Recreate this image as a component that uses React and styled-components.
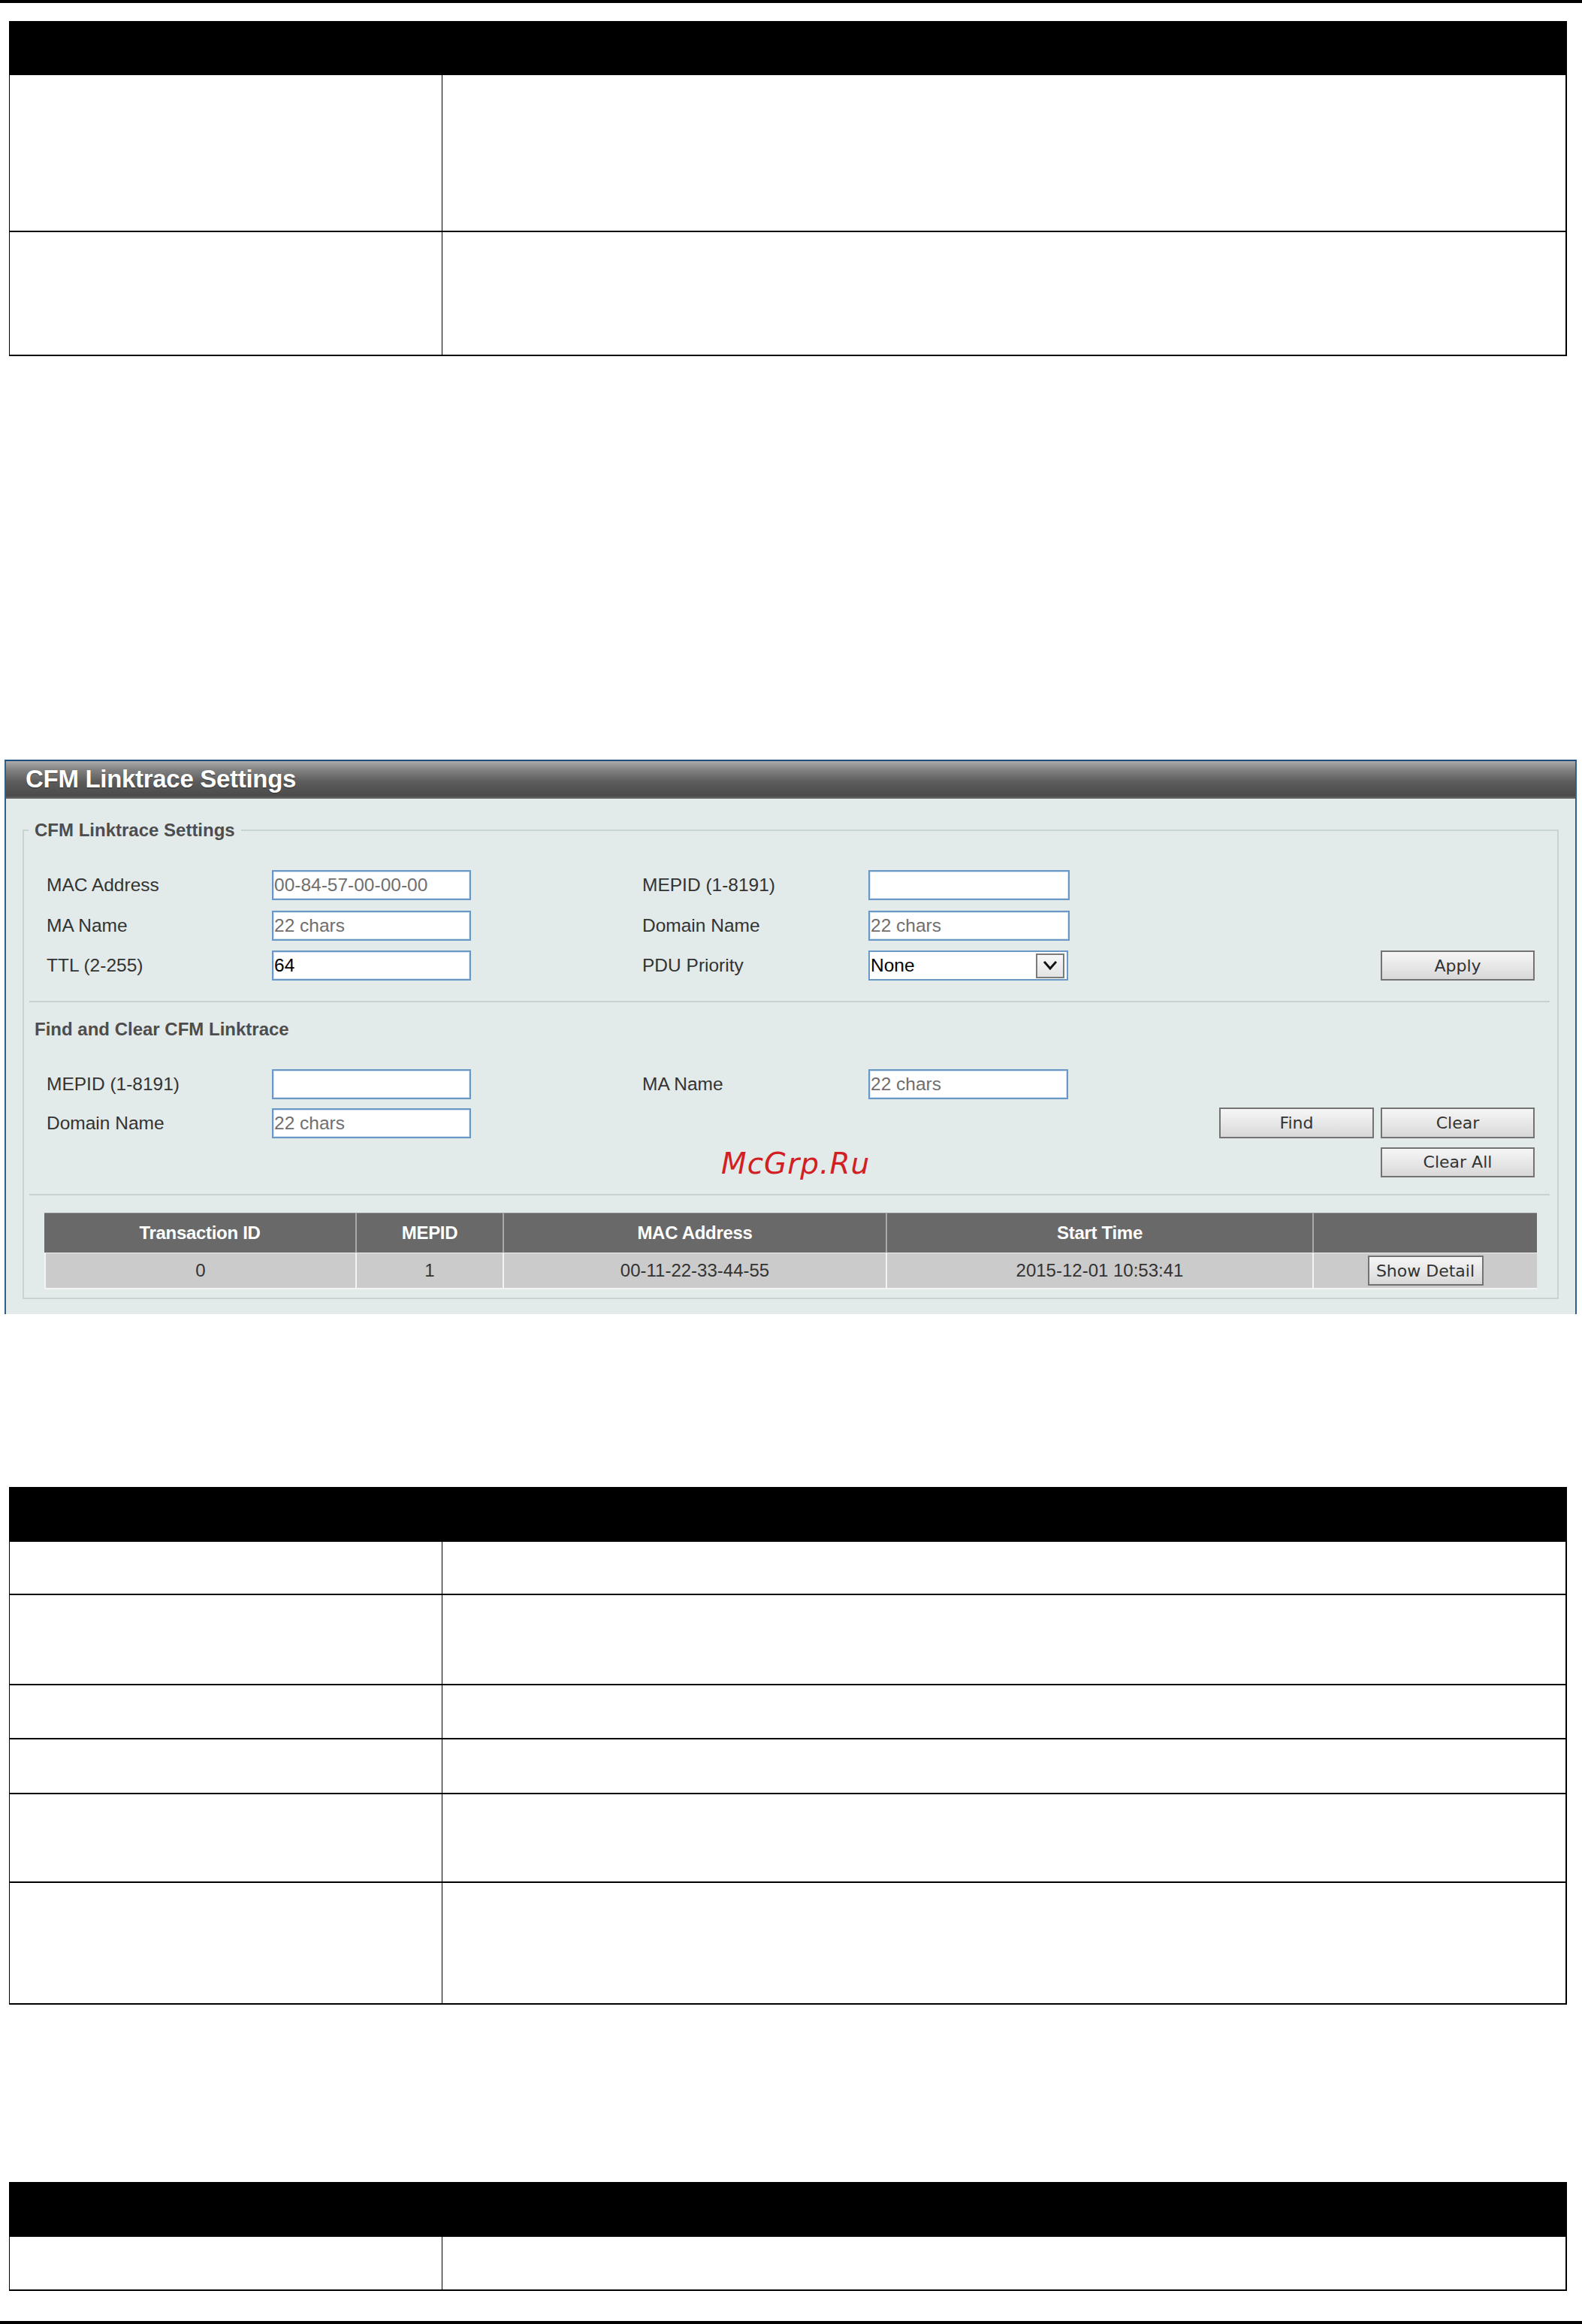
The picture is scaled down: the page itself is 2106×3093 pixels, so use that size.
import React from 'react';
import styled, { createGlobalStyle } from 'styled-components';

const GlobalStyle = createGlobalStyle`
  html, body {
    margin: 0;
    padding: 0;
    background: #ffffff;
  }
  body {
    font-family: 'Liberation Sans', Arial, sans-serif;
  }
`;

const Page = styled.div`
  width: 2106px;
  display: flex;
  flex-direction: column;
`;

const Rule = styled.div`
  height: ${(p) => p.h}px;
  margin-top: ${(p) => p.mt || 0}px;
  background: #000000;
`;

/* blank parameter tables of the manual page */
const DocTable = styled.div`
  margin: ${(p) => p.mt}px 20px 0 12px;
  border-left: 1px solid #000;
  border-right: 2px solid #000;
`;

const DocHead = styled.div`
  height: ${(p) => p.h}px;
  background: #000;
`;

const DocRow = styled.div`
  display: grid;
  grid-template-columns: 575px 1fr;
  height: ${(p) => p.h}px;
  box-sizing: border-box;
  border-bottom: 2px solid #000;
`;

const DocCell = styled.div`
  & + & {
    border-left: 1px solid #000;
  }
`;

/* web UI panel */
const Panel = styled.section`
  position: relative;
  margin: 537px 7px 0 6px;
  border-top: 2px solid #1d4f7c;
  border-left: 2px solid #2f5f8c;
  border-right: 2px solid #2f5f8c;
  background: #e2eaea;
  padding-bottom: 20px;
`;

const PanelHeader = styled.div`
  height: 50px;
  line-height: 48px;
  padding-left: 26px;
  background: linear-gradient(
    to bottom,
    #ababab 0%,
    #838383 22%,
    #5c5c5c 55%,
    #4a4a4a 92%,
    #6c6c6c 100%
  );
  color: #ffffff;
  font-size: 33px;
  font-weight: bold;
  letter-spacing: -0.3px;
  text-shadow: 0 1px 1px rgba(0, 0, 0, 0.45);
`;

const Fieldset = styled.fieldset`
  margin: 28px 22px 0;
  padding: 0 0 11px;
  min-width: 0;
  border: 2px solid #c8d3d3;
`;

const Legend = styled.legend`
  margin-left: 6px;
  padding: 0 8px;
  font-size: 24px;
  line-height: 28px;
  font-weight: bold;
  color: #4d4d4d;
`;

const SubTitle = styled.div`
  margin: 22px 0 0 14px;
  font-size: 24px;
  line-height: 28px;
  font-weight: bold;
  color: #4d4d4d;
`;

const Separator = styled.div`
  height: 2px;
  margin: ${(p) => p.mt}px 10px 0 7px;
  background: #c6d1d1;
`;

const FormGrid = styled.div`
  display: grid;
  grid-template-columns: 300px 265px 228px 301px 268px 1fr 205px;
  grid-auto-rows: ${(p) => p.rowH}px;
  row-gap: ${(p) => p.gap}px;
  align-items: center;
  margin: ${(p) => p.mt}px 30px 0;
`;

const Label = styled.label`
  font-size: 24.5px;
  color: #333333;
  white-space: nowrap;
`;

const TextInput = styled.input`
  box-sizing: border-box;
  width: ${(p) => p.w || 265}px;
  height: 40px;
  padding: 0 1px;
  border: 2px solid #6a98c6;
  box-shadow: inset 0 0 0 1px #d6e4f2;
  background: #ffffff;
  font-family: 'Liberation Sans', Arial, sans-serif;
  font-size: 24.5px;
  color: #000000;
  outline: none;

  &::placeholder {
    color: #6f6f6f;
    opacity: 1;
  }
`;

const SelectBox = styled.div`
  box-sizing: border-box;
  width: 266px;
  height: 40px;
  display: flex;
  align-items: center;
  justify-content: space-between;
  padding: 0 3px 0 1px;
  border: 2px solid #6a98c6;
  background: #ffffff;
  font-size: 24.5px;
  color: #000000;
`;

const SelectArrow = styled.div`
  box-sizing: border-box;
  width: 38px;
  height: 33px;
  display: flex;
  align-items: center;
  justify-content: center;
  border: 2px solid #7b7b7b;
  background: linear-gradient(#f7f7f7, #e4e4e4);
`;

const Button = styled.button`
  box-sizing: border-box;
  width: ${(p) => p.w || 205}px;
  height: ${(p) => p.h || 40}px;
  padding: 0;
  border: 2px solid #737373;
  background: linear-gradient(to bottom, #f6f6f6 0%, #e6e6e6 55%, #d8d8d8 100%);
  font-family: 'DejaVu Sans', Verdana, sans-serif;
  font-size: 22px;
  color: #333333;
  grid-column: ${(p) => p.col || 'auto'};
`;

const ButtonGroup = styled.div`
  grid-column: 5 / 8;
  display: flex;
  justify-content: flex-end;
  gap: 9px;
`;

const ResultGrid = styled.div`
  display: grid;
  grid-template-columns: 414px 196px 510px 568px 299px;
  margin: 23px 27px 0;
  border-bottom: 2px solid #f4f4f4;
`;

const HeadCell = styled.div`
  height: 53px;
  display: flex;
  align-items: center;
  justify-content: center;
  background: #696969;
  border-top: 1px solid #8a8a8a;
  color: #ffffff;
  font-size: 24px;
  font-weight: bold;
  letter-spacing: -0.3px;
  box-sizing: border-box;

  & + & {
    border-left: 2px solid #a9a9a9;
  }
`;

const DataCell = styled.div`
  height: 47px;
  display: flex;
  align-items: center;
  justify-content: center;
  background: #cbcbcb;
  border-top: 1px solid #eeeeee;
  box-sizing: border-box;
  color: #333333;
  font-size: 24px;

  &:not(:first-child) {
    border-left: 2px solid #f4f4f4;
  }
`;

const Watermark = styled.div`
  position: absolute;
  left: 952px;
  top: 516px;
  font-family: 'DejaVu Sans', Verdana, sans-serif;
  font-style: italic;
  font-size: 39px;
  line-height: 1;
  color: #d21f24;
  letter-spacing: 1px;
`;

const ChevronIcon = () => (
  <svg width="20" height="16" viewBox="0 0 20 16">
    <polyline
      points="3,4 10,12 17,4"
      fill="none"
      stroke="#111"
      strokeWidth="3"
      strokeLinecap="square"
    />
  </svg>
);

const table2Rows = [71, 120, 72, 73, 118, 162];

const App = () => {
  return (
    <Page>
      <GlobalStyle />
      <Rule h={4} />

      <DocTable mt={24}>
        <DocHead h={72} />
        <DocRow h={209}>
          <DocCell />
          <DocCell />
        </DocRow>
        <DocRow h={165}>
          <DocCell />
          <DocCell />
        </DocRow>
      </DocTable>

      <Panel>
        <PanelHeader>CFM Linktrace Settings</PanelHeader>
        <Fieldset>
          <Legend>CFM Linktrace Settings</Legend>

          <FormGrid mt={39} rowH={40} gap={13.5}>
            <Label>MAC Address</Label>
            <TextInput placeholder="00-84-57-00-00-00" />
            <span />
            <Label>MEPID (1-8191)</Label>
            <TextInput w={268} />
            <span />
            <span />

            <Label>MA Name</Label>
            <TextInput placeholder="22 chars" />
            <span />
            <Label>Domain Name</Label>
            <TextInput w={268} placeholder="22 chars" />
            <span />
            <span />

            <Label>TTL (2-255)</Label>
            <TextInput defaultValue="64" />
            <span />
            <Label>PDU Priority</Label>
            <SelectBox>
              <span>None</span>
              <SelectArrow>
                <ChevronIcon />
              </SelectArrow>
            </SelectBox>
            <span />
            <Button h={40}>Apply</Button>
          </FormGrid>

          <Separator mt={27} />
          <SubTitle>Find and Clear CFM Linktrace</SubTitle>

          <FormGrid mt={38} rowH={41} gap={11}>
            <Label>MEPID (1-8191)</Label>
            <TextInput />
            <span />
            <Label>MA Name</Label>
            <TextInput w={266} placeholder="22 chars" />
            <span />
            <span />

            <Label>Domain Name</Label>
            <TextInput placeholder="22 chars" />
            <span />
            <ButtonGroup>
              <Button w={206} h={41}>Find</Button>
              <Button w={205} h={41}>Clear</Button>
            </ButtonGroup>

            <Button col="7" h={40}>Clear All</Button>
          </FormGrid>

          <Separator mt={22} />

          <ResultGrid>
            <HeadCell>Transaction ID</HeadCell>
            <HeadCell>MEPID</HeadCell>
            <HeadCell>MAC Address</HeadCell>
            <HeadCell>Start Time</HeadCell>
            <HeadCell />
            <DataCell>0</DataCell>
            <DataCell>1</DataCell>
            <DataCell>00-11-22-33-44-55</DataCell>
            <DataCell>2015-12-01 10:53:41</DataCell>
            <DataCell>
              <Button w={154} h={40}>Show Detail</Button>
            </DataCell>
          </ResultGrid>
        </Fieldset>
        <Watermark>McGrp.Ru</Watermark>
      </Panel>

      <DocTable mt={230}>
        <DocHead h={73} />
        {table2Rows.map((h, i) => (
          <DocRow key={i} h={h}>
            <DocCell />
            <DocCell />
          </DocRow>
        ))}
      </DocTable>

      <DocTable mt={236}>
        <DocHead h={73} />
        <DocRow h={72}>
          <DocCell />
          <DocCell />
        </DocRow>
      </DocTable>

      <Rule h={5} mt={40} />
    </Page>
  );
};

export default App;
